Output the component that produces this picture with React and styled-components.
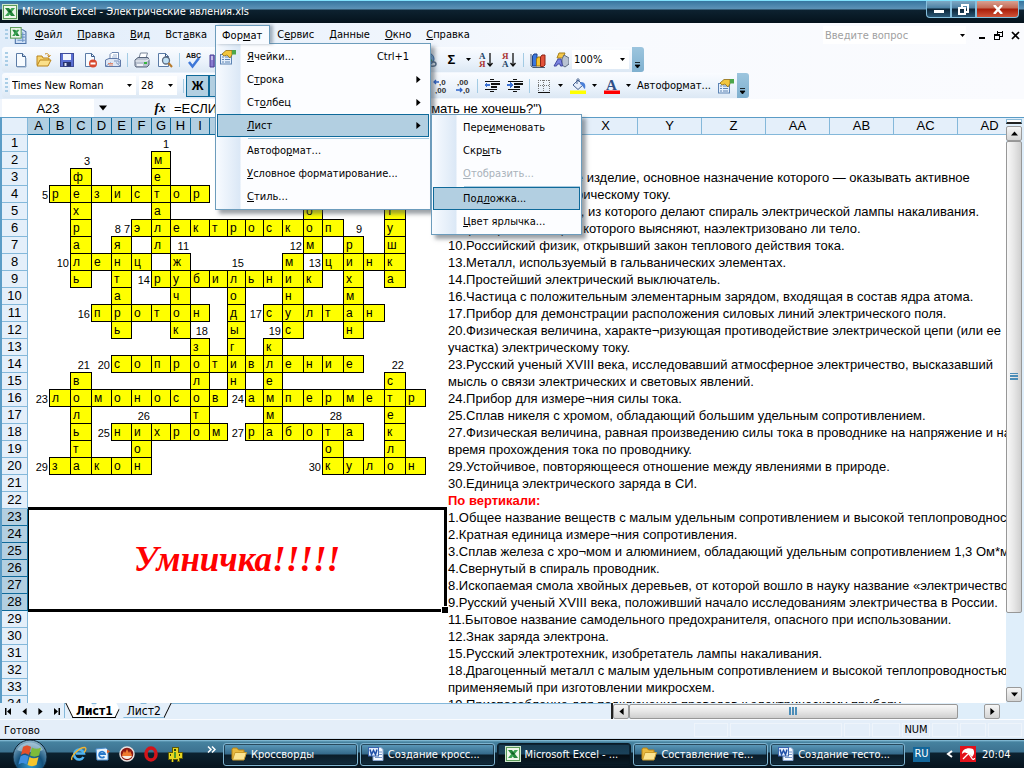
import React, { useState } from 'react';
import styled, { createGlobalStyle, css } from 'styled-components';

const uiFont = 'Tahoma, "DejaVu Sans Condensed", "DejaVu Sans", sans-serif';
const sheetFont = '"Liberation Sans", Arial, sans-serif';

const GlobalStyle = createGlobalStyle`
  * {
    box-sizing: border-box;
  }
  body {
    margin: 0;
    overflow: hidden;
    font-family: ${uiFont};
    font-size: 11px;
    color: #000;
  }
  button, input, select {
    font: inherit;
    color: inherit;
    margin: 0;
    padding: 0;
    border: none;
    background: none;
    border-radius: 0;
  }
  svg {
    display: block;
    flex: none;
  }
`;

// Window frame
const Desktop = styled.div`
  display: flex;
  flex-direction: column;
  height: 100vh;
  background: #e4effa;
`;

const TitleBar = styled.header`
  display: flex;
  align-items: flex-start;
  height: 23px;
  flex: none;
  padding-left: 2px;
  padding-right: 5px;
  border-top: 1px solid #7fe0fb;
  background: linear-gradient(#37759f 0, #5d93b8 8px, #0d2230 9px, #04121c 100%);
  color: #fff;
`;

const TitleText = styled.h1`
  flex: 1;
  margin: 0;
  padding-left: 4px;
  font-size: 11px;
  font-weight: normal;
  line-height: 22px;
  white-space: nowrap;
`;

const TitleIcon = styled.span`
  padding-top: 3px;
`;

const WindowButton = styled.button`
  display: flex;
  align-items: center;
  justify-content: center;
  width: ${(p) => (p.$close ? 43 : 25)}px;
  height: 17px;
  border: 1px solid #86c0de;
  border-top: none;
  border-radius: ${(p) => (p.$close ? '0 0 4px 0' : p.$first ? '0 0 0 4px' : '0')};
  background: ${(p) =>
    p.$close
      ? 'linear-gradient(#d9a091 0, #c46a55 7px, #a81c08 8px, #d0543a 100%)'
      : 'linear-gradient(#7fa9c4 0, #4d81a3 7px, #0b2436 8px, #2a5876 100%)'};
`;

// Menu bar
const MenuBar = styled.nav`
  display: flex;
  align-items: center;
  height: 24px;
  flex: none;
  padding-left: 5px;
  background: linear-gradient(90deg, #e1edfa, #f8fafe 60%, #fafbfe);
`;

const Grip = styled.span`
  width: 3px;
  height: ${(p) => p.$h || 14}px;
  margin-right: ${(p) => p.$gap || 1}px;
  flex: none;
  background: repeating-linear-gradient(#a9cde6 0, #a9cde6 2px, transparent 2px, transparent 4px);
`;

const DocIcon = styled.span`
  margin-right: 1px;
`;

const MenuItem = styled.div`
  position: relative;
  height: 20px;
`;

const MenuButton = styled.button`
  position: relative;
  height: 19px;
  padding: 0 8px 0 7px;
  white-space: nowrap;
  ${(p) =>
    p.$open &&
    css`
      z-index: 3;
      padding: 0 7px 0 6px;
      border: 1px solid #6c9cbc;
      border-bottom: none;
      background: #f8fbff;
      box-shadow: 3px 0 3px rgba(90, 110, 130, 0.5);
    `}
`;

const Question = styled.label`
  display: flex;
  align-items: center;
  width: 143px;
  height: 18px;
  margin-left: auto;
  margin-right: 7px;
  background: #fff;

  input {
    flex: 1;
    min-width: 0;
    padding-left: 2px;
    outline: none;
  }
  input::placeholder {
    color: #a0a0a0;
    opacity: 1;
  }
  svg {
    margin-right: 1px;
  }
`;

const ChildButton = styled.button`
  display: flex;
  justify-content: center;
  width: 17px;
`;

// Popup menus
const Popup = styled.div`
  position: absolute;
  z-index: ${(p) => (p.$sub ? 4 : 2)};
  top: ${(p) => (p.$sub ? '0' : '18px')};
  left: ${(p) => (p.$sub ? '214px' : '0')};
  width: ${(p) => (p.$sub ? 151 : 216)}px;
  padding: 1px;
  border: 1px solid #6c9cbc;
  background: linear-gradient(90deg, #f8fbff 0, #dbe8f6 24px, #fcfdff 25px);
  box-shadow: 4px 4px 4px rgba(60, 70, 80, 0.5);
`;

const PopupRow = styled.div`
  position: relative;
`;

const PopupButton = styled.button`
  display: flex;
  align-items: center;
  width: 100%;
  height: 23px;
  padding-right: 6px;
  border: 1px solid ${(p) => (p.$active ? '#0f6a9a' : 'transparent')};
  background: ${(p) => (p.$active ? '#b2cfe1' : 'none')};
  color: ${(p) => (p.disabled ? '#a9b2ba' : '#000')};
  text-align: left;
  white-space: nowrap;
`;

const PopupIcon = styled.span`
  width: 29px;
  padding-left: 2px;
  flex: none;
`;

const PopupLabel = styled.span`
  flex: 1;
`;

const Shortcut = styled.span`
  padding-right: 13px;
`;

const PopupLine = styled.hr`
  height: 1px;
  margin: 1px 0 0 31px;
  border: none;
  background: #a9cbe0;
`;

// Toolbars
const ToolbarRow = styled.div`
  display: flex;
  height: 26px;
  flex: none;
  background: linear-gradient(90deg, #e1edfa, #f8fafe 60%, #fafbfe);
`;

const Toolbar = styled.div`
  display: flex;
  align-items: center;
  height: 25px;
  margin-left: 2px;
  padding-left: 3px;
  border-radius: 3px;
  background: linear-gradient(#fafcff, #eaf2fb 60%, #dce8f4);
`;

const ToolButton = styled.button`
  display: flex;
  align-items: center;
  justify-content: center;
  width: 23px;
  height: 22px;
  flex: none;
  font-family: ${sheetFont};
  font-size: 13px;
  font-weight: bold;
  ${(p) =>
    p.$pressed &&
    css`
      border: 1px solid #0f6a9a;
      background: #b2cfe1;
    `}
`;

const DropArrow = styled.button`
  display: flex;
  align-items: center;
  justify-content: center;
  width: 11px;
  height: 22px;
`;

const TextTool = styled.button`
  width: 80px;
  height: 22px;
  white-space: nowrap;
`;

const Divider = styled.span`
  width: 1px;
  height: 14px;
  margin: 0 2px 0 3px;
  flex: none;
  background: #a3cbe4;
`;

const Combo = styled.span`
  position: relative;
  display: flex;
  align-items: center;
  width: ${(p) => p.$w}px;
  height: 19px;
  margin-right: 3px;
  background: #fff;

  select {
    width: 100%;
    height: 100%;
    padding-left: 2px;
    appearance: none;
    outline: none;
  }
  svg {
    position: absolute;
    right: 4px;
    pointer-events: none;
  }
`;

const ToolbarEnd = styled.button`
  display: flex;
  align-items: flex-end;
  justify-content: center;
  width: 12px;
  height: 25px;
  padding-bottom: 3px;
  border-radius: 0 3px 3px 0;
  background: linear-gradient(#9cc5de, #7fb0cf);
`;

// Formula bar
const FormulaBar = styled.div`
  display: flex;
  height: 18px;
  flex: none;
  font-family: ${sheetFont};
  font-size: 13px;
  background: #f0f5fc;
`;

const NameBox = styled.input`
  width: 92px;
  margin-left: 2px;
  background: #fff;
  text-align: center;
  outline: none;
`;

const NameArrow = styled.button`
  display: flex;
  align-items: center;
  justify-content: center;
  width: 18px;
`;

const FxButton = styled.button`
  width: 20px;
  margin-left: 38px;
  font-family: "Liberation Serif", serif;
  font-style: italic;
  font-weight: bold;
  line-height: 16px;
`;

const FormulaInput = styled.input`
  flex: 1;
  min-width: 0;
  padding-left: 4px;
  background: #fff;
  outline: none;
`;

// Sheet
const SheetArea = styled.main`
  display: flex;
  flex: 1;
  min-height: 0;
  border-top: 1px solid #5b9cc6;
  border-left: 2px solid #5b9cc6;
`;

const SheetView = styled.div`
  flex: 1;
  min-width: 0;
  overflow: hidden;
  background: #fff;
`;

const Sheet = styled.table`
  width: 1020px;
  table-layout: fixed;
  border-collapse: separate;
  border-spacing: 0;
  font-family: ${sheetFont};
  font-size: 13px;
  line-height: 16px;
`;

const Head = styled.th`
  height: 17px;
  padding: 0;
  border-right: 1px solid ${(p) => (p.$on ? '#0f6a9a' : '#84b8da')};
  border-bottom: 1px solid ${(p) => (p.$on ? '#0f6a9a' : '#84b8da')};
  background: ${(p) => (p.$on ? '#b2cfe1' : '#e4effa')};
  font-weight: normal;
  text-align: center;
`;

const Cell = styled.td`
  height: 17px;
  padding: 0 2px;
  font-size: 11px;
  text-align: right;
  white-space: nowrap;
`;

const LetterCell = styled(Cell)`
  padding: 0 0 0 2px;
  border-right: 1px solid #000;
  border-bottom: 1px solid #000;
  background: #ff0;
  box-shadow: -1px 0 0 #000, 0 -1px 0 #000, -1px -1px 0 #000;
  font-size: 12px;
  line-height: 16px;
  text-align: left;
`;

const ClueCell = styled.td`
  height: 17px;
  padding: 0 0 0 2px;
  white-space: nowrap;
  ${(p) =>
    p.$title &&
    css`
      color: #f00;
      font-weight: bold;
    `}
`;

const ResultCell = styled.td`
  position: relative;
  padding: 0;
  color: #f00;
  font-family: "Liberation Serif", "Times New Roman", serif;
  font-size: 35px;
  font-style: italic;
  font-weight: bold;
  line-height: 40px;
  text-align: center;

  &::before {
    content: '';
    position: absolute;
    inset: -2px -1px -1px 0;
    border: 3px solid #000;
    border-left-width: 1px;
  }
  &::after {
    content: '';
    position: absolute;
    right: -2px;
    bottom: -2px;
    width: 6px;
    height: 6px;
    border: solid #fff;
    border-width: 1px 0 0 1px;
    background: #000;
  }
`;

// Scroll bars
const VScroll = styled.div`
  display: flex;
  flex-direction: column;
  width: 18px;
  padding: 0 2px 1px 0;
  background: #dfeefa;
`;

const SplitBox = styled.span`
  height: 5px;
  margin: 1px 0 2px;
  border: 1px solid #8ab9d6;
  border-bottom: 2px solid #222;
  background: #fff;
`;

const ScrollButton = styled.button`
  display: flex;
  align-items: center;
  justify-content: center;
  width: 16px;
  height: 15px;
  flex: none;
  border: 1px solid #9a9a9a;
  border-radius: 2px;
  background: linear-gradient(#f6f6f6, #d4d4d4);
`;

const ScrollThumb = styled.span`
  display: flex;
  align-items: center;
  justify-content: center;
  flex: ${(p) => p.$grow};
  border: 1px solid #979797;
  border-radius: 2px;
  background: linear-gradient(${(p) => (p.$across ? '180deg' : '90deg')}, #f8f8f8, #e6e6e6 50%, #cfcfcf);
`;

const ScrollGap = styled.span`
  flex: ${(p) => p.$grow};
`;

// Sheet tabs
const TabRow = styled.div`
  display: flex;
  height: 16px;
  flex: none;
  background: #e4effa;
`;

const TabNav = styled.button`
  display: flex;
  align-items: center;
  justify-content: center;
  width: 16px;
`;

const TabLane = styled.div`
  display: flex;
  flex: 1;
  height: 15px;
  border-top: 1px solid #84b8da;
  border-left: 1px solid #84b8da;
`;

const Tab = styled.button`
  position: relative;
  height: 15px;
  margin-top: -1px;
  padding: 0 7px;
  margin-left: ${(p) => (p.$active ? '4px' : '0')};
  font-size: 12px;
  line-height: 14px;
  font-weight: ${(p) => (p.$active ? 'bold' : 'normal')};

  span {
    position: relative;
    z-index: 1;
  }
  &::before,
  &::after {
    content: '';
    position: absolute;
    top: 0;
    bottom: 0;
    width: 50%;
    border-bottom: 1px solid ${(p) => (p.$active ? '#000' : '#84b8da')};
    background: ${(p) => (p.$active ? '#fff' : '#e4effa')};
  }
  &::before {
    left: 0;
    border-left: ${(p) => (p.$active ? '1px solid #000' : 'none')};
    transform: skewX(26deg);
  }
  &::after {
    right: 0;
    border-right: 1px solid #000;
    transform: skewX(-26deg);
  }
`;

const HScroll = styled.div`
  display: flex;
  align-items: center;
  width: 413px;
  height: 16px;
  padding-right: 24px;
  border-left: 2px solid #222;
  background: #dfeefa;

  ${ScrollThumb} {
    height: 15px;
  }
`;

const StatusBar = styled.footer`
  display: flex;
  align-items: center;
  height: 20px;
  flex: none;
  padding: 2px 0 0;
  border-top: 1px solid #fafcff;
  border-bottom: 1px solid #cfe0f0;
  background: #e4eef9;
`;

const StatusText = styled.span`
  flex: 1;
  padding-left: 4px;
`;

const StatusSlot = styled.span`
  width: ${(p) => p.$w}px;
  height: 14px;
  margin-right: 2px;
  border: 1px solid #eef4fb;
  line-height: 12px;
  text-align: center;
`;

// Taskbar
const Taskbar = styled.footer`
  display: flex;
  align-items: center;
  height: 29px;
  flex: none;
  border-top: 1px solid #000;
  background: linear-gradient(#8fc6e0 0, #46829f 2px, #3c7290 12px, #0c2230 13px, #06131d 100%);
  color: #fff;
`;

const StartButton = styled.button`
  width: 36px;
  height: 28px;
  margin-left: 12px;
  margin-right: 19px;
  overflow: hidden;
`;

const LaunchButton = styled.button`
  display: flex;
  align-items: center;
  justify-content: center;
  width: 24px;
  height: 22px;
`;

const MoreLaunch = styled.button`
  display: flex;
  align-items: center;
  justify-content: center;
  width: 36px;
  height: 28px;
  padding: 0 0 10px 13px;
`;

const TaskList = styled.div`
  display: flex;
  flex: 1;
  gap: 2px;
  min-width: 0;
`;

const TaskButton = styled.button`
  display: flex;
  align-items: center;
  gap: 4px;
  flex: 1;
  min-width: 0;
  height: 23px;
  padding-left: 7px;
  border: 1px solid ${(p) => (p.$active ? '#0a1a26' : '#7fb4d0')};
  border-radius: 3px;
  background: ${(p) =>
    p.$active
      ? 'linear-gradient(#173a50 0, #1b425a 10px, #050d14 11px, #0a1c28 100%)'
      : 'linear-gradient(#5e9cbd 0, #34698a 10px, #0a1c29 11px, #112b3c 100%)'};
  box-shadow: inset 0 0 0 1px rgba(5, 20, 30, 0.6);
  white-space: nowrap;
`;

const Tray = styled.div`
  display: flex;
  align-items: center;
  width: 119px;
  padding-left: 8px;
`;

const Language = styled.button`
  width: 17px;
  height: 15px;
  background: #12669a;
  line-height: 14px;
  text-align: center;
`;

const TrayArrow = styled.button`
  display: flex;
  justify-content: center;
  width: 30px;
  padding-left: 9px;
`;

const Clock = styled.time`
  padding-left: 6px;
`;

// Icons
const Icon = ({ size = 16, children, crisp }) => (
  <svg width={size} height={size} viewBox="0 0 16 16" shapeRendering={crisp ? 'crispEdges' : 'auto'} aria-hidden="true">
    {children}
  </svg>
);

const Arrow = ({ dir = 'down', size = 5 }) => {
  const d = { down: 'M0 1h5L2.5 4z', right: 'M1 0v5l3-2.5z', left: 'M4 0v5L1 2.5z', up: 'M0 4h5L2.5 1z' };
  return (
    <svg width={size} height={size} viewBox="0 0 5 5" aria-hidden="true">
      <path d={d[dir]} fill="#000" />
    </svg>
  );
};

const GripMark = ({ down }) => (
  <svg width="10" height="8" viewBox="0 0 10 8" shapeRendering="crispEdges" aria-hidden="true">
    <path d={down ? 'M1 0h8M1 3h8M1 6h8' : 'M1 0v8M4 0v8M7 0v8'} stroke="#4b8db8" strokeWidth="2" />
  </svg>
);

const ExcelIcon = () => (
  <Icon>
    <rect x=".5" y=".5" width="15" height="15" fill="#5c9c5a" stroke="#cfe8cd" />
    <rect x="2" y="2" width="12" height="12" fill="#eef6ea" />
    <path d="M3 4h4l6 8H9z" fill="#23853a" />
    <path d="M13 4H9.500L3 12h3.500z" fill="#3aa152" />
    <path d="M6 7l2-1 2 2-2 1z" fill="#0f5b22" />
  </Icon>
);

const ExcelDocIcon = () => (
  <Icon size={17}>
    <path d="M5 2.500h7l3 2v11H5z" fill="#cfe0f6" stroke="#4b72a8" />
    <path d="M10 7h4M10 9.500h4M7 12.500h7M12 5v9" stroke="#6e95c6" />
    <rect x=".5" y=".5" width="10" height="10" fill="#eff7ec" stroke="#5c9c5a" />
    <path d="M2 2.500h3l4 6H6z" fill="#23853a" />
    <path d="M9 2.500H6.500L2 8.500h2.500z" fill="#3aa152" />
  </Icon>
);

const NewIcon = () => (
  <Icon>
    <path d="M3.500 1.500h6l3 3v10h-9z" fill="#f7fbff" stroke="#5b7ba6" />
    <path d="M9.500 1.500v3h3" fill="#c9dbf0" stroke="#3b5c8a" />
    <path d="M4 15h9V6" stroke="#8da6c4" fill="none" />
  </Icon>
);

const OpenIcon = () => (
  <Icon>
    <path d="M1 13V4h5l1 2h6v3" fill="#f7d672" stroke="#b98218" />
    <path d="M1 14L4 8h11l-3 6z" fill="#fbe08a" stroke="#b98218" />
    <path d="M9 2c2-1 4 0 4 2M11.500 3.500L13 5l1.500-2" fill="none" stroke="#c98a1e" />
  </Icon>
);

const SaveIcon = () => (
  <Icon>
    <rect x="1.500" y="1.500" width="13" height="13" fill="#5a6fd2" stroke="#3f4c9a" />
    <rect x="4" y="2" width="8" height="6" fill="#f2f6fd" />
    <rect x="4" y="10" width="8" height="4.500" fill="#28346e" />
    <rect x="5.500" y="11" width="2" height="3" fill="#dfe6f8" />
  </Icon>
);

const PermissionIcon = () => (
  <Icon>
    <path d="M3.500 1.500h6l3 3v10h-9z" fill="#f7fbff" stroke="#5b7ba6" />
    <path d="M9.500 1.500v3h3" fill="none" stroke="#3b5c8a" />
    <circle cx="11" cy="11.500" r="4" fill="#d8482e" />
    <rect x="8.500" y="10.500" width="5" height="2" fill="#fff" />
  </Icon>
);

const MailIcon = () => (
  <Icon>
    <path d="M5 7V2.500L7 .5h6.500V9" fill="#fff" stroke="#7088b0" />
    <path d="M8 3h4M7 5h5" stroke="#9fb4d4" />
    <path d="M.5 8L4 6.500h8L15.500 8v6.500H.5z" fill="#dde7f5" stroke="#6079a8" />
    <path d="M1 14l5-3.500M15 14l-4-3.500M9 9h5v3" fill="none" stroke="#7c95c0" />
    <path d="M3 11.500h5M4 13h4" stroke="#e08a70" />
  </Icon>
);

const PrintIcon = () => (
  <Icon>
    <path d="M5 6l1.500-5h7L12 6" fill="#fff" stroke="#7a8699" />
    <path d="M1 8l3-2.500h10L15 8v5l-2 2H2l-1-1.500z" fill="#b9c2d0" stroke="#56637a" />
    <path d="M1.500 9H12l3-1.500" stroke="#f4f7fb" fill="none" />
    <rect x="10" y="10" width="3" height="2" fill="#35b53d" />
    <path d="M3 12h6v2H3z" fill="#eef2f8" />
  </Icon>
);

const PreviewIcon = () => (
  <Icon>
    <path d="M1.500 1.500h7l3 3v10h-10z" fill="#f7fbff" stroke="#5b7ba6" />
    <path d="M8.500 1.500v3h3" fill="none" stroke="#3b5c8a" />
    <circle cx="9" cy="8.500" r="3.500" fill="#bfe0f5" stroke="#5c6b80" strokeWidth="1.300" />
    <path d="M11.500 11l3.500 4" stroke="#b87a2b" strokeWidth="2" />
  </Icon>
);

const SpellIcon = () => (
  <svg width="18" height="18" viewBox="0 0 18 18" aria-hidden="true">
    <text x="1" y="7" fontFamily="Liberation Sans" fontSize="7" fill="#111">ABC</text>
    <path d="M4 11l3.500 4.500L14 7" fill="none" stroke="#3f78d8" strokeWidth="2.500" />
  </svg>
);

const ResearchIcon = () => (
  <Icon>
    <path d="M1 3h4v12H1zM6 3h4v12H6z" fill="#8a7bd0" stroke="#4d4396" />
    <path d="M2 5h2M2 7h2M7 5h2M7 7h2" stroke="#fff" />
    <path d="M11 3h4v12h-4z" fill="#c3a23c" stroke="#8a6e1b" />
  </Icon>
);

const LinkIcon = () => (
  <Icon>
    <circle cx="7" cy="7" r="6" fill="#7db1e8" stroke="#2c66a8" />
    <path d="M3 4c3-1 4 2 7 0M3 9c2-2 5 1 8-1" stroke="#3f9b4b" fill="none" strokeWidth="2" />
    <path d="M8 12c0-3 7-3 7 0s-7 3-7 0" fill="none" stroke="#536b86" strokeWidth="1.500" />
  </Icon>
);

const SortIcon = ({ up }) => (
  <Icon>
    <text x="1" y="7" fontFamily="Liberation Serif" fontWeight="bold" fontSize="9" fill={up ? '#a33' : '#246'}>
      {up ? 'Я' : 'А'}
    </text>
    <text x="1" y="15" fontFamily="Liberation Serif" fontWeight="bold" fontSize="9" fill={up ? '#246' : '#a33'}>
      {up ? 'А' : 'Я'}
    </text>
    <path d="M12 1v12M9.500 11L12 14l2.500-3" fill="none" stroke="#111" strokeWidth="1.300" />
  </Icon>
);

const ChartIcon = () => (
  <Icon>
    <path d="M1 2v12l2 1.500h12" fill="none" stroke="#4a5a70" />
    <path d="M2.500 4l1.500-2h3v12h-4.500z" fill="#3c78dc" stroke="#1c3f88" />
    <path d="M6.500 7L8 5h2.500v9h-4z" fill="#f7c52e" stroke="#9d7412" />
    <path d="M10.500 5L12 3h3v10l-1.500 1.500h-3z" fill="#e2513a" stroke="#8b2314" />
  </Icon>
);

const DrawingIcon = () => (
  <Icon>
    <path d="M6 1h6l-2 5H4z" fill="#f4c84a" stroke="#a67e18" />
    <path d="M9 7l2-4 5 3v6l-4 3-3-2z" fill="#b8c3d2" stroke="#5e6c80" />
    <path d="M1 14L5 7h3l1.500 7H7.500L7 12H4.500L3.500 14z" fill="#7b84e0" stroke="#4148a0" />
  </Icon>
);

const DecimalIcon = ({ more }) => (
  <svg width="18" height="16" viewBox="0 0 18 16" aria-hidden="true">
    <text x={more ? 8 : 3} y="7" fontFamily="Liberation Sans" fontSize="8" fill="#333">{more ? ',0' : ',00'}</text>
    <text x={more ? 4 : 9} y="15" fontFamily="Liberation Sans" fontSize="8" fill="#333">{more ? ',00' : ',0'}</text>
    <path d={more ? 'M8 4H3M5 2L3 4l2 2' : 'M2 12h6M6 10l2 2-2 2'} fill="none" stroke="#2d62c8" strokeWidth="1.300" />
  </svg>
);

const IndentIcon = ({ more }) => (
  <Icon crisp>
    <path d="M6 1.500h4M1 3.500h15M1 11.500h12M6 13.500h4" stroke="#111" />
    <path d="M7 6h9M7 9h6" stroke="#111" strokeWidth="2" />
    <path d={more ? 'M0 6h3V4l3 3-3 3V8H0z' : 'M6 6H3V4L0 7l3 3V8h3z'} fill="#3c72d4" />
  </Icon>
);

const BorderIcon = () => (
  <Icon crisp>
    <path d="M2.500 2v11M7.500 2v11M13.500 2v11M2 2.500h12M2 7.500h12" stroke="#777" strokeDasharray="1 1" />
    <path d="M2 14.500h12" stroke="#111" />
  </Icon>
);

const FillIcon = () => (
  <Icon>
    <path d="M3 7l5-5 5 5-5 4.500z" fill="#e6eefb" stroke="#44608f" />
    <path d="M7 6V1.500c0-1 2-1 2 0V4" fill="none" stroke="#44608f" />
    <path d="M11 4c4 0 5 3 4 7-2-1-2-4-5-5z" fill="#4a7fd8" />
    <rect y="12.500" width="16" height="3.500" fill="#ff0" />
  </Icon>
);

const FontColorIcon = () => (
  <Icon>
    <text x="2" y="12" fontFamily="Liberation Serif" fontWeight="bold" fontSize="15" fill="#2f4f86">A</text>
    <rect y="12.500" width="16" height="3.500" fill="#f00" />
  </Icon>
);

const FormatIcon = () => (
  <Icon>
    <rect x=".5" y="5.500" width="11" height="9.500" fill="#e5effb" stroke="#5d84b4" />
    <path d="M2 8h2M5 8h5M2 10.500h2M5 10.500h5M2 13h2M5 13h5" stroke="#5d84b4" />
    <path d="M2 5l4-3.500h6v4.500L10 9 7 6 4 7z" fill="#f2c63d" stroke="#8d6b12" strokeWidth=".8" />
    <path d="M12 1h4v4.500h-4z" fill="#4ca64a" />
  </Icon>
);

const FolderIcon = () => (
  <Icon>
    <path d="M1 13V3l1-1h4l1.500 2H13v3" fill="#e9b93f" stroke="#b78316" />
    <path d="M1.500 14L4 6.500h11.500L13 14z" fill="#fbe490" stroke="#c99a2a" />
  </Icon>
);

const WordIcon = () => (
  <Icon>
    <path d="M5 1.500h8l2 2v11H5z" fill="#f4f8ff" stroke="#8aa7d0" />
    <path d="M11 6h3M11 8.500h3M7 11.500h7" stroke="#7596c8" />
    <rect x=".5" y="1.500" width="10" height="8.500" fill="#e3ecfb" stroke="#3a66b0" />
    <path d="M2 3.500l1.500 5 2-4 2 4L9 3.500" fill="none" stroke="#1f4fa6" strokeWidth="1.500" />
  </Icon>
);

const StartOrb = () => (
  <svg width="36" height="36" viewBox="0 0 36 36" aria-hidden="true">
    <defs>
      <radialGradient id="orb" cx="50%" cy="75%" r="75%">
        <stop offset="0" stopColor="#2f9ad0" />
        <stop offset=".5" stopColor="#14507a" />
        <stop offset="1" stopColor="#8fb6cc" />
      </radialGradient>
    </defs>
    <circle cx="18" cy="17" r="17" fill="url(#orb)" stroke="#0b2233" />
    <path d="M5 10C10 0 26 0 31 10c-6 3-20 3-26 0z" fill="#cfe3ef" opacity=".5" />
    <path d="M11 7c3-2 5-2 8 0l-2 8c-3-2-5-2-8 0z" fill="#e2502a" />
    <path d="M20 7.500c3 2 6 1.500 9 0l-2 8c-3 1.500-6 1.500-9 0z" fill="#7dbb3a" />
    <path d="M8.500 16.500c3-2 5-2 8 0l-2 8c-3-2-5-2-8 0z" fill="#3f8fe0" />
    <path d="M17.500 17c3 2 6 1.500 9 0l-2 8c-3 1.500-6 1.500-9 0z" fill="#f6c52b" />
  </svg>
);

const IeIcon = () => (
  <Icon>
    <path d="M12.500 11A5 5 0 1 1 13 7.500H5" fill="none" stroke="#4fb4f2" strokeWidth="2.500" />
    <path d="M1 14C-1 11 8 1 14 1.500c2 1 0 4-1 5" fill="none" stroke="#f2b530" strokeWidth="1.300" />
  </Icon>
);

const OutlookIcon = () => (
  <Icon>
    <path d="M1 3l10-1 2 2v10H2z" fill="#e9f3fd" stroke="#4a8fd0" />
    <path d="M9.500 10.500a3 3 0 1 1 .5-2.500H5" fill="none" stroke="#2a78c8" strokeWidth="1.800" />
    <path d="M12 3.500l3 2-3 2z" fill="#e0662a" />
  </Icon>
);

const FlameIcon = () => (
  <Icon>
    <circle cx="8" cy="8" r="7" fill="#8c1712" stroke="#e9e2e0" strokeWidth="1.500" />
    <path d="M3 9c1-1 1-3 2-4l1 2 2-4 2 4 1-2c1 1 1 3 2 4-1 5-9 5-10 0z" fill="#ee7a2f" />
    <path d="M3 10h10c-2 4-8 4-10 0z" fill="#f6efe8" />
  </Icon>
);

const OperaIcon = () => (
  <Icon>
    <ellipse cx="8" cy="8" rx="5" ry="6" fill="none" stroke="#d3141a" strokeWidth="3.500" />
  </Icon>
);

const QipIcon = () => (
  <Icon crisp>
    <path d="M5 1h6v5h4v6h-3v3h-2v-2H6v3H4v-3H1V6h4z" fill="#e6d51f" stroke="#5b5a0a" />
    <path d="M7 3h2v2H7z" fill="#33400a" />
    <path d="M7 6h2v6H7z" fill="#4d9a2c" />
    <path d="M3 8h1v2H3zM12 8h1v2h-1z" fill="#33400a" />
  </Icon>
);

const UmbrellaIcon = () => (
  <Icon>
    <rect width="16" height="16" fill="#e3121b" />
    <path d="M2 8C2 3 8 1 13 3c2 3 1 6-1 8-1-1-1-2-3-3-1-1-2-1-3-1-1-1-3 0-4 1z" fill="#fff" />
    <path d="M9 7l-6 6M9 8l3 4.500c1 1.500 2.500 1 2.500-.5" stroke="#fff" strokeWidth="1.300" fill="none" />
  </Icon>
);

// Data
const COLUMNS = [
  ['A', 22], ['B', 21], ['C', 21], ['D', 20], ['E', 20], ['F', 20], ['G', 19], ['H', 20], ['I', 19], ['J', 18], ['K', 18],
  ['L', 18], ['M', 19], ['N', 21], ['O', 19], ['P', 21], ['Q', 20], ['R', 21], ['S', 21], ['T', 20], ['U', 20],
  ['V', 64], ['W', 64], ['X', 64], ['Y', 64], ['Z', 64], ['AA', 64], ['AB', 64], ['AC', 64], ['AD', 64],
];
const PUZZLE_COLUMNS = COLUMNS.slice(0, 21).map(([name]) => name);

const ACROSS = [
  ['B', 4, 'резистор'], ['F', 6, 'электроскоп'], ['C', 8, 'ленц'], ['P', 8, 'цинк'], ['G', 9, 'рубильник'],
  ['D', 11, 'протон'], ['M', 11, 'султан'], ['E', 14, 'сопротивление'], ['B', 16, 'ломоносов'],
  ['L', 16, 'амперметр'], ['E', 18, 'нихром'], ['L', 18, 'работа'], ['B', 20, 'закон'], ['P', 20, 'кулон'],
];

const DOWN = [
  ['G', 2, 'металл'], ['O', 2, 'килоом'], ['C', 3, 'фехраль'], ['S', 3, 'катушка'], ['E', 7, 'янтарь'],
  ['Q', 7, 'рихман'], ['H', 8, 'жучок'], ['N', 8, 'минус'], ['K', 9, 'лодыгин'], ['I', 13, 'золото'],
  ['M', 13, 'клемма'], ['C', 15, 'вольта'], ['S', 15, 'стекло'], ['F', 18, 'ион'], ['P', 18, 'ток'],
];

const NUMBERS = {
  G1: '1', C2: '3', A4: '5', E6: '8 7', Q6: '9', H7: '11', N7: '12', B8: '10', K8: '15', O8: '13', F9: '14',
  C11: '16', L11: '17', I12: '18', M12: '19', C14: '21', D14: '20', S14: '22', A16: '23', K16: '24',
  F17: '26', P17: '28', D18: '25', K18: '27', A20: '29', O20: '30',
};

const CLUES = {
  2: 'По горизонтали:',
  3: '5.Электротехническое изделие, основное назначение которого — оказывать активное',
  4: 'сопротивление электрическому току.',
  5: '6.Тугоплавкий металл, из которого делают спираль электрической лампы накаливания.',
  6: '7.Прибор, с помощью которого выясняют, наэлектризовано ли тело.',
  7: '10.Российский физик, открывший закон теплового действия тока.',
  8: '13.Металл, используемый в гальванических элементах.',
  9: '14.Простейший электрический выключатель.',
  10: '16.Частица с положительным элементарным зарядом, входящая в состав ядра атома.',
  11: '17.Прибор для демонстрации расположения силовых линий электрического поля.',
  12: '20.Физическая величина, характе¬ризующая противодействие электрической цепи (или ее',
  13: 'участка) электрическому току.',
  14: '23.Русский ученый XVIII века, исследовавший атмосферное электричество, высказавший',
  15: 'мысль о связи электрических и световых явлений.',
  16: '24.Прибор для измере¬ния силы тока.',
  17: '25.Сплав никеля с хромом, обладающий большим удельным сопротивлением.',
  18: '27.Физическая величина, равная произведению силы тока в проводнике на напряжение и на',
  19: 'время прохождения тока по проводнику.',
  20: '29.Устойчивое, повторяющееся отношение между явлениями в природе.',
  21: '30.Единица электрического заряда в СИ.',
  22: 'По вертикали:',
  23: '1.Общее название веществ с малым удельным сопротивлением и высокой теплопроводностью.',
  24: '2.Кратная единица измере¬ния сопротивления.',
  25: '3.Сплав железа с хро¬мом и алюминием, обладающий удельным сопротивлением 1,3 Ом*мм',
  26: '4.Свернутый в спираль проводник.',
  27: '8.Ископаемая смола хвойных деревьев, от которой вошло в науку название «электричество».',
  28: '9.Русский ученый XVIII века, положивший начало исследованиям электричества в России.',
  29: '11.Бытовое название самодельного предохранителя, опасного при использовании.',
  30: '12.Знак заряда электрона.',
  31: '15.Русский электротехник, изобретатель лампы накаливания.',
  32: '18.Драгоценный металл с малым удельным сопротивлением и высокой теплопроводностью,',
  33: 'применяемый при изготовлении микросхем.',
  34: '19.Приспособление для подключения проводов к электрическому прибору.',
};

const letters = {};
const place = (words, dc, dr) =>
  words.forEach(([col, row, word]) =>
    [...word].forEach((ch, i) => {
      letters[PUZZLE_COLUMNS[PUZZLE_COLUMNS.indexOf(col) + i * dc] + (row + i * dr)] = ch;
    })
  );
place(ACROSS, 1, 0);
place(DOWN, 0, 1);

const ROWS = Array.from({ length: 34 }, (_, i) => i + 1);

// "Фор&мат" -> the letter after & is underlined
const Mnemonic = ({ text }) => {
  const [before, after] = text.split('&');
  return (
    <>
      {before}
      <u>{after[0]}</u>
      {after.slice(1)}
    </>
  );
};

const SubMenu = () => (
  <Popup $sub>
    {['Пере&именовать', 'Скр&ыть', '&Отобразить...'].map((t) => (
      <PopupButton key={t} disabled={t.startsWith('&О')}>
        <PopupIcon />
        <PopupLabel><Mnemonic text={t} /></PopupLabel>
      </PopupButton>
    ))}
    <PopupLine />
    <PopupButton $active>
      <PopupIcon />
      <PopupLabel><Mnemonic text="Под&ложка..." /></PopupLabel>
    </PopupButton>
    <PopupButton>
      <PopupIcon />
      <PopupLabel><Mnemonic text="&Цвет ярлычка..." /></PopupLabel>
    </PopupButton>
  </Popup>
);

const FormatMenu = () => (
  <Popup>
    <PopupButton>
      <PopupIcon><FormatIcon /></PopupIcon>
      <PopupLabel><Mnemonic text="&Ячейки..." /></PopupLabel>
      <Shortcut>Ctrl+1</Shortcut>
    </PopupButton>
    {['С&трока', 'Ст&олбец'].map((t) => (
      <PopupButton key={t}>
        <PopupIcon />
        <PopupLabel><Mnemonic text={t} /></PopupLabel>
        <Arrow dir="right" size={7} />
      </PopupButton>
    ))}
    <PopupRow>
      <PopupButton $active>
        <PopupIcon />
        <PopupLabel><Mnemonic text="&Лист" /></PopupLabel>
        <Arrow dir="right" size={7} />
      </PopupButton>
      <SubMenu />
    </PopupRow>
    <PopupLine />
    {['Автофо&рмат...', '&Условное форматирование...', '&Стиль...'].map((t) => (
      <PopupButton key={t}>
        <PopupIcon />
        <PopupLabel><Mnemonic text={t} /></PopupLabel>
      </PopupButton>
    ))}
  </Popup>
);

const Tool = ({ label, children, pressed }) => (
  <ToolButton aria-label={label} $pressed={pressed}>{children}</ToolButton>
);

const Drop = ({ label }) => (
  <DropArrow aria-label={label}><Arrow /></DropArrow>
);

const Picker = ({ label, value, width }) => (
  <Combo $w={width}>
    <select aria-label={label} defaultValue={value}>
      <option>{value}</option>
    </select>
    <Arrow />
  </Combo>
);

const EndMark = () => (
  <svg width="6" height="7" viewBox="0 0 6 7" aria-hidden="true">
    <path d="M0 .5h5M0 3h5L2.500 6z" stroke="#000" strokeWidth=".8" />
  </svg>
);

const StandardToolbar = () => (
  <ToolbarRow>
    <Toolbar>
      <Grip $h={16} />
      <Tool label="Создать"><NewIcon /></Tool>
      <Tool label="Открыть"><OpenIcon /></Tool>
      <Tool label="Сохранить"><SaveIcon /></Tool>
      <Tool label="Разрешения"><PermissionIcon /></Tool>
      <Tool label="Сообщение"><MailIcon /></Tool>
      <Divider />
      <Tool label="Печать"><PrintIcon /></Tool>
      <Tool label="Просмотр"><PreviewIcon /></Tool>
      <Divider />
      <Tool label="Орфография"><SpellIcon /></Tool>
      <Tool label="Справочные материалы"><ResearchIcon /></Tool>
      <Divider />
      <Tool label="Вырезать" />
      <Tool label="Копировать" />
      <Tool label="Вставить" />
      <Drop label="Параметры вставки" />
      <Tool label="Формат по образцу" />
      <Divider />
      <Tool label="Отменить" />
      <Drop label="Список отмены" />
      <Tool label="Вернуть" />
      <Drop label="Список возврата" />
      <Divider />
      <Tool label="Гиперссылка"><LinkIcon /></Tool>
      <Tool label="Автосумма">Σ</Tool>
      <Drop label="Другие функции" />
      <Tool label="По возрастанию"><SortIcon /></Tool>
      <Tool label="По убыванию"><SortIcon up /></Tool>
      <Divider />
      <Tool label="Диаграмма"><ChartIcon /></Tool>
      <Tool label="Рисование"><DrawingIcon /></Tool>
      <Picker label="Масштаб" value="100%" width={57} />
      <ToolbarEnd aria-label="Параметры панели"><EndMark /></ToolbarEnd>
    </Toolbar>
  </ToolbarRow>
);

const FormattingToolbar = () => (
  <ToolbarRow>
    <Toolbar>
      <Grip $h={16} $gap={2} />
      <Picker label="Шрифт" value="Times New Roman" width={126} />
      <Picker label="Размер" value="28" width={38} />
      <Divider />
      <Tool label="Полужирный" pressed>Ж</Tool>
      <Tool label="Курсив" pressed><i>К</i></Tool>
      <Tool label="Подчеркнутый" />
      <Divider />
      <Tool label="По левому краю" />
      <Tool label="По центру" />
      <Tool label="По правому краю" />
      <Tool label="Объединить" />
      <Divider />
      <Tool label="Денежный формат" />
      <Tool label="Процентный формат" />
      <Tool label="Формат с разделителями" />
      <Tool label="Увеличить разрядность"><DecimalIcon more /></Tool>
      <Tool label="Уменьшить разрядность"><DecimalIcon /></Tool>
      <Divider />
      <Tool label="Уменьшить отступ"><IndentIcon /></Tool>
      <Tool label="Увеличить отступ"><IndentIcon more /></Tool>
      <Divider />
      <Tool label="Границы"><BorderIcon /></Tool>
      <Drop label="Виды границ" />
      <Tool label="Цвет заливки"><FillIcon /></Tool>
      <Drop label="Палитра заливки" />
      <Tool label="Цвет шрифта"><FontColorIcon /></Tool>
      <Drop label="Палитра шрифта" />
      <TextTool><Mnemonic text="Автофо&рмат..." /></TextTool>
      <Tool label="Формат ячеек"><FormatIcon /></Tool>
      <ToolbarEnd aria-label="Параметры панели"><EndMark /></ToolbarEnd>
    </Toolbar>
  </ToolbarRow>
);

const SheetRow = ({ row }) => {
  const inResult = row >= 23 && row <= 28;
  return (
    <tr>
      <Head scope="row" $on={inResult}>{row}</Head>
      {row === 23 && <ResultCell colSpan={21} rowSpan={6}>Умничка!!!!!</ResultCell>}
      {!inResult &&
        PUZZLE_COLUMNS.map((col) => {
          const id = col + row;
          return letters[id] ? (
            <LetterCell key={id}>{letters[id]}</LetterCell>
          ) : (
            <Cell key={id}>{NUMBERS[id]}</Cell>
          );
        })}
      <ClueCell colSpan={9} $title={row === 2 || row === 22}>{CLUES[row]}</ClueCell>
    </tr>
  );
};

const MENUS = ['&Файл', '&Правка', '&Вид', 'Вст&авка', 'Фор&мат', 'С&ервис', '&Данные', '&Окно', '&Справка'];

const TASKS = [
  ['Кроссворды', FolderIcon],
  ['Создание кросс...', WordIcon],
  ['Microsoft Excel - ...', ExcelIcon],
  ['Составление те...', FolderIcon],
  ['Создание тесто...', WordIcon],
];

// Main Component
const App = () => {
  const [open, setOpen] = useState('Фор&мат');
  const [sheet, setSheet] = useState('Лист1');

  return (
    <Desktop>
      <GlobalStyle />
      <TitleBar>
        <TitleIcon><ExcelIcon /></TitleIcon>
        <TitleText>Microsoft Excel - Электрические явления.xls</TitleText>
        <WindowButton $first aria-label="Свернуть">
          <svg width="12" height="10" viewBox="0 0 12 10"><path d="M1 6h10v3H1z" fill="#fff" /></svg>
        </WindowButton>
        <WindowButton aria-label="Восстановить">
          <svg width="11" height="11" viewBox="0 0 11 11" fill="none" stroke="#fff" strokeWidth="2">
            <path d="M4 3V1h6v7H8M1 4h6v6H1z" />
          </svg>
        </WindowButton>
        <WindowButton $close aria-label="Закрыть">
          <svg width="10" height="9" viewBox="0 0 10 9"><path d="M1 0l8 9M9 0L1 9" stroke="#fff" strokeWidth="2.500" /></svg>
        </WindowButton>
      </TitleBar>

      <MenuBar>
        <Grip $h={12} $gap={2} />
        <DocIcon><ExcelDocIcon /></DocIcon>
        {MENUS.map((name) => (
          <MenuItem key={name}>
            <MenuButton $open={open === name} onClick={() => setOpen(open === name ? null : name)}>
              <Mnemonic text={name} />
            </MenuButton>
            {name === 'Фор&мат' && open === name && <FormatMenu />}
          </MenuItem>
        ))}
        <Question>
          <input aria-label="Вопрос" placeholder="Введите вопрос" />
          <Arrow />
        </Question>
        <ChildButton aria-label="Свернуть окно">
          <svg width="9" height="9" viewBox="0 0 9 9"><path d="M2 6h6v2H2z" /></svg>
        </ChildButton>
        <ChildButton aria-label="Восстановить окно">
          <svg width="9" height="9" viewBox="0 0 9 9" fill="none" stroke="#000" shapeRendering="crispEdges">
            <path d="M3 1h6M3.500 0v4M8.500 0v5.500H6M1 4h5M.5 3.500h5v5h-5z" />
          </svg>
        </ChildButton>
        <ChildButton aria-label="Закрыть окно">
          <svg width="9" height="9" viewBox="0 0 9 9"><path d="M1 1l7 7M8 1L1 8" stroke="#000" strokeWidth="1.700" /></svg>
        </ChildButton>
      </MenuBar>

      <StandardToolbar />
      <FormattingToolbar />

      <FormulaBar>
        <NameBox aria-label="Имя" defaultValue="A23" />
        <NameArrow aria-label="Список имен"><Arrow size={8} /></NameArrow>
        <FxButton aria-label="Вставка функции">fx</FxButton>
        <FormulaInput
          aria-label="Строка формул"
          defaultValue={'=ЕСЛИ(СЧЁТ(A:U)=9;"Умничка!!!!!";"А подумать не хочешь?")'}
        />
      </FormulaBar>

      <SheetArea>
        <SheetView>
          <Sheet>
            <colgroup>
              <col style={{ width: 26 }} />
              {COLUMNS.map(([name, width]) => (
                <col key={name} style={{ width }} />
              ))}
            </colgroup>
            <thead>
              <tr>
                <Head aria-label="Выделить все" />
                {COLUMNS.map(([name]) => (
                  <Head key={name} scope="col" $on={PUZZLE_COLUMNS.includes(name)}>{name}</Head>
                ))}
              </tr>
            </thead>
            <tbody>
              {ROWS.map((row) => (
                <SheetRow key={row} row={row} />
              ))}
            </tbody>
          </Sheet>
        </SheetView>
        <VScroll>
          <SplitBox />
          <ScrollButton aria-label="Вверх"><Arrow dir="up" size={7} /></ScrollButton>
          <ScrollThumb $grow={472}><GripMark down /></ScrollThumb>
          <ScrollGap $grow={74} />
          <ScrollButton aria-label="Вниз"><Arrow size={7} /></ScrollButton>
        </VScroll>
      </SheetArea>

      <TabRow>
        <TabNav aria-label="Первый лист">
          <svg width="7" height="7" viewBox="0 0 7 7"><path d="M0 0h1.500v7H0zM6 0v7L2 3.500z" /></svg>
        </TabNav>
        <TabNav aria-label="Предыдущий лист"><Arrow dir="left" size={7} /></TabNav>
        <TabNav aria-label="Следующий лист"><Arrow dir="right" size={7} /></TabNav>
        <TabNav aria-label="Последний лист">
          <svg width="7" height="7" viewBox="0 0 7 7"><path d="M5.500 0H7v7H5.500zM1 0v7l4-3.500z" /></svg>
        </TabNav>
        <TabLane>
          {['Лист1', 'Лист2'].map((name) => (
            <Tab key={name} $active={sheet === name} onClick={() => setSheet(name)}>
              <span>{name}</span>
            </Tab>
          ))}
        </TabLane>
        <HScroll>
          <ScrollButton aria-label="Влево"><Arrow dir="left" size={7} /></ScrollButton>
          <ScrollThumb $across $grow={330}><GripMark /></ScrollThumb>
          <ScrollGap $grow={26} />
          <ScrollButton aria-label="Вправо"><Arrow dir="right" size={7} /></ScrollButton>
        </HScroll>
      </TabRow>

      <StatusBar>
        <StatusText>Готово</StatusText>
        <StatusSlot $w={34} />
        <StatusSlot $w={112} />
        <StatusSlot $w={26} />
        <StatusSlot $w={28} />
        <StatusSlot $w={28}>NUM</StatusSlot>
        <StatusSlot $w={26} />
        <StatusSlot $w={26} />
        <StatusSlot $w={34} />
      </StatusBar>

      <Taskbar>
        <StartButton aria-label="Пуск"><StartOrb /></StartButton>
        <LaunchButton aria-label="Internet Explorer"><IeIcon /></LaunchButton>
        <LaunchButton aria-label="Outlook Express"><OutlookIcon /></LaunchButton>
        <LaunchButton aria-label="Nero"><FlameIcon /></LaunchButton>
        <LaunchButton aria-label="Opera"><OperaIcon /></LaunchButton>
        <LaunchButton aria-label="QIP"><QipIcon /></LaunchButton>
        <MoreLaunch aria-label="Еще">
          <svg width="9" height="7" viewBox="0 0 9 7"><path d="M1 .5l3 3-3 3M5 .5l3 3-3 3" fill="none" stroke="#fff" strokeWidth="1.500" /></svg>
        </MoreLaunch>
        <TaskList>
          {TASKS.map(([name, TaskIcon]) => (
            <TaskButton key={name} $active={name.startsWith('Microsoft')}>
              <TaskIcon />
              {name}
            </TaskButton>
          ))}
        </TaskList>
        <Tray>
          <Language aria-label="Язык">RU</Language>
          <TrayArrow aria-label="Показать значки">
            <svg width="7" height="8" viewBox="0 0 7 8"><path d="M6 1L2 4l4 3" fill="none" stroke="#fff" strokeWidth="2" /></svg>
          </TrayArrow>
          <UmbrellaIcon />
          <Clock>20:04</Clock>
        </Tray>
      </Taskbar>
    </Desktop>
  );
};

export default App;
